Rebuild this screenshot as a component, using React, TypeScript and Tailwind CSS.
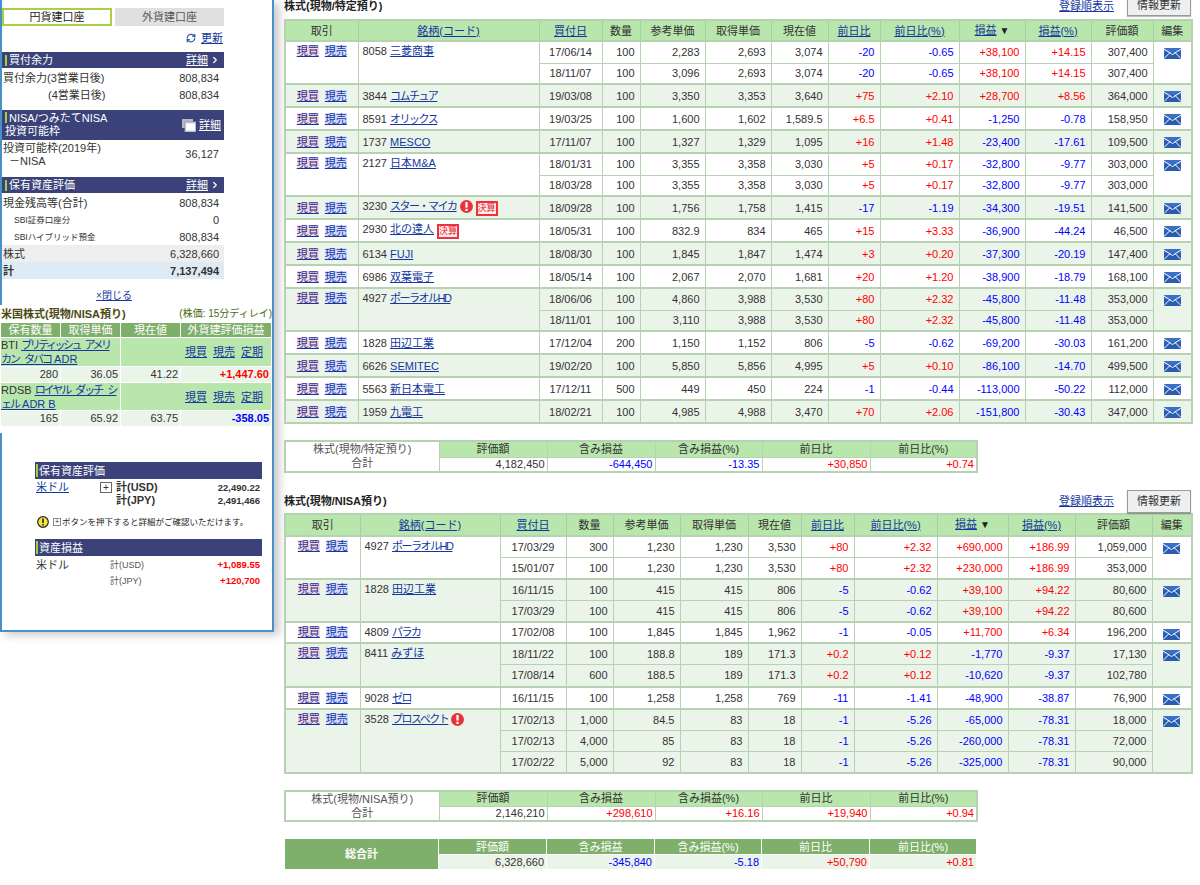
import React from "react";
import { RefreshCw, ChevronRight } from "lucide-react";

type Group = { code: string; name: string; warn?: boolean; badge?: boolean; rows: string[][]; hs?: number[] };

const t1: Group[] = [
  { code: "8058", name: "三菱商事", rows: [
    ["17/06/14","100","2,283","2,693","3,074","-20","-0.65","+38,100","+14.15","307,400"],
    ["18/11/07","100","3,096","2,693","3,074","-20","-0.65","+38,100","+14.15","307,400"]] },
  { code: "3844", name: "コムチュア", rows: [["19/03/08","100","3,350","3,353","3,640","+75","+2.10","+28,700","+8.56","364,000"]] },
  { code: "8591", name: "オリックス", rows: [["19/03/25","100","1,600","1,602","1,589.5","+6.5","+0.41","-1,250","-0.78","158,950"]] },
  { code: "1737", name: "MESCO", rows: [["17/11/07","100","1,327","1,329","1,095","+16","+1.48","-23,400","-17.61","109,500"]] },
  { code: "2127", name: "日本M&A", rows: [
    ["18/01/31","100","3,355","3,358","3,030","+5","+0.17","-32,800","-9.77","303,000"],
    ["18/03/28","100","3,355","3,358","3,030","+5","+0.17","-32,800","-9.77","303,000"]] },
  { code: "3230", name: "スター・マイカ", warn: true, badge: true, rows: [["18/09/28","100","1,756","1,758","1,415","-17","-1.19","-34,300","-19.51","141,500"]] },
  { code: "2930", name: "北の達人", badge: true, rows: [["18/05/31","100","832.9","834","465","+15","+3.33","-36,900","-44.24","46,500"]] },
  { code: "6134", name: "FUJI", rows: [["18/08/30","100","1,845","1,847","1,474","+3","+0.20","-37,300","-20.19","147,400"]] },
  { code: "6986", name: "双葉電子", rows: [["18/05/14","100","2,067","2,070","1,681","+20","+1.20","-38,900","-18.79","168,100"]] },
  { code: "4927", name: "ポーラオルHD", rows: [
    ["18/06/06","100","4,860","3,988","3,530","+80","+2.32","-45,800","-11.48","353,000"],
    ["18/11/01","100","3,110","3,988","3,530","+80","+2.32","-45,800","-11.48","353,000"]] },
  { code: "1828", name: "田辺工業", rows: [["17/12/04","200","1,150","1,152","806","-5","-0.62","-69,200","-30.03","161,200"]] },
  { code: "6626", name: "SEMITEC", rows: [["19/02/20","100","5,850","5,856","4,995","+5","+0.10","-86,100","-14.70","499,500"]] },
  { code: "5563", name: "新日本電工", rows: [["17/12/11","500","449","450","224","-1","-0.44","-113,000","-50.22","112,000"]] },
  { code: "1959", name: "九電工", rows: [["18/02/21","100","4,985","4,988","3,470","+70","+2.06","-151,800","-30.43","347,000"]] },
];

const t2: Group[] = [
  { code: "4927", name: "ポーラオルHD", rows: [
    ["17/03/29","300","1,230","1,230","3,530","+80","+2.32","+690,000","+186.99","1,059,000"],
    ["15/01/07","100","1,230","1,230","3,530","+80","+2.32","+230,000","+186.99","353,000"]] },
  { code: "1828", name: "田辺工業", rows: [
    ["16/11/15","100","415","415","806","-5","-0.62","+39,100","+94.22","80,600"],
    ["17/03/29","100","415","415","806","-5","-0.62","+39,100","+94.22","80,600"]] },
  { code: "4809", name: "パラカ", rows: [["17/02/08","100","1,845","1,845","1,962","-1","-0.05","+11,700","+6.34","196,200"]], hs: [21] },
  { code: "8411", name: "みずほ", rows: [
    ["18/11/22","100","188.8","189","171.3","+0.2","+0.12","-1,770","-9.37","17,130"],
    ["17/08/14","600","188.5","189","171.3","+0.2","+0.12","-10,620","-9.37","102,780"]], hs: [22, 22] },
  { code: "9028", name: "ゼロ", rows: [["16/11/15","100","1,258","1,258","769","-11","-1.41","-48,900","-38.87","76,900"]], hs: [22] },
  { code: "3528", name: "プロスペクト", warn: true, rows: [
    ["17/02/13","1,000","84.5","83","18","-1","-5.26","-65,000","-78.31","18,000"],
    ["17/02/13","4,000","85","83","18","-1","-5.26","-260,000","-78.31","72,000"],
    ["17/02/22","5,000","92","83","18","-1","-5.26","-325,000","-78.31","90,000"]] },
];

const A = ({ children, className = "" }: { children: React.ReactNode; className?: string }) => (
  <a href="#" className={"text-[#13379f] underline " + className}>{children}</a>
);

const sign = (v: string) => (v.startsWith("+") ? "text-[#ff0000]" : v.startsWith("-") ? "text-[#0000ff]" : "");
const kana = (s: string) => /[ァ-ヶー]/.test(s);

const Warn = () => (
  <svg width="13" height="13" viewBox="0 0 13 13" className="inline-block align-[-3px] ml-[3px]">
    <circle cx="6.5" cy="6.5" r="6.5" fill="#e8323c" />
    <rect x="5.4" y="2" width="2.2" height="5.6" fill="#ffffff" />
    <rect x="5.4" y="8.8" width="2.2" height="2.2" fill="#ffffff" />
  </svg>
);

const Badge = () => (
  <span className="inline-block ml-[3px] border-2 border-[#f0303c] bg-[#ffeeee] text-[#e8202c] text-[9px] leading-[9px] px-0 py-[1px] align-[-1px]">決算</span>
);

const Mail = () => (
  <svg width="17" height="11" viewBox="0 0 17 11" className="block mx-auto">
    <rect x="0" y="0" width="17" height="11" fill="#2a5cb0" />
    <rect x="0" y="0" width="17" height="4" fill="#3a70c8" />
    <path d="M0 1 L8.5 6.5 L17 1 M0 10.5 L6 4.5 M17 10.5 L11 4.5" stroke="#ffffff" strokeWidth="1" fill="none" />
  </svg>
);

const heads: [string, boolean][] = [
  ["取引", false], ["銘柄(コード)", true], ["買付日", true], ["数量", false], ["参考単価", false], ["取得単価", false],
  ["現在値", false], ["前日比", true], ["前日比(%)", true], ["損益", true], ["損益(%)", true], ["評価額", false], ["編集", false],
];

const StockTable = ({ groups, cols, singleH, headH }: { groups: Group[]; cols: React.ReactNode; singleH: number; headH: number }) => (
  <table className="table-fixed border-collapse w-[907px] border-2 border-[#b7d2b2]">
    {cols}
    <thead>
      <tr style={{ height: headH }} className="bg-[#b9e6ac]">
        {heads.map(([h, link]) => (
          <th key={h} className="border border-[#a9cda2] font-normal text-center p-0">
            {link ? <A>{h}</A> : h}
            {h === "損益" && <span className="text-[10px] text-[#222] ml-[3px]">▼</span>}
          </th>
        ))}
      </tr>
    </thead>
    <tbody>
      {groups.map((g, gi) => {
        const bg = gi % 2 === 1 ? "bg-[#ebf4e9]" : "bg-white";
        const n = g.rows.length;
        const top = n > 1 ? "align-top pt-[2px]" : "align-middle";
        return g.rows.map((r, ri) => {
          const h = g.hs ? g.hs[ri] : n === 1 ? singleH : ri === 0 ? 22 : 21;
          return (
            <tr key={g.code + ri} style={{ height: h }} className={bg + (ri === 0 ? " border-t-2 border-[#b7d2b2]" : "")}>
              {ri === 0 && (
                <>
                  <td rowSpan={n} className={"border-x border-[#b7d2b2] text-center p-0 " + top}>
                    <a href="#" className="text-[#13379f] underline bg-[#ffd6d6]">現買</a>
                    <a href="#" className="text-[#13379f] underline bg-[#d6dcff] ml-[6px]">現売</a>
                  </td>
                  <td rowSpan={n} className={"border-x border-[#b7d2b2] pl-[4px] pr-0 py-0 whitespace-nowrap " + top}>
                    {g.code} <A className={kana(g.name) ? "tracking-[-1.5px]" : ""}>{g.name}</A>
                    {g.warn && <Warn />}
                    {g.badge && <Badge />}
                  </td>
                </>
              )}
              {r.map((v, i) => (
                <td
                  key={i}
                  className={
                    "border border-[#b7d2b2] py-0 whitespace-nowrap " +
                    (i === 0 ? "text-center px-0 " : "text-right pl-0 pr-[5px] ") +
                    (i >= 5 && i <= 8 ? sign(v) : "")
                  }
                >
                  {v}
                </td>
              ))}
              {ri === 0 && (
                <td rowSpan={n} className="border-x border-[#b7d2b2] align-top pt-[6px] p-0">
                  <Mail />
                </td>
              )}
            </tr>
          );
        });
      })}
    </tbody>
  </table>
);

const cols1 = (
  <colgroup>
    <col className="w-[73px]" /><col className="w-[181px]" /><col className="w-[63px]" /><col className="w-[38px]" />
    <col className="w-[65px]" /><col className="w-[66px]" /><col className="w-[57px]" /><col className="w-[52px]" />
    <col className="w-[79px]" /><col className="w-[66px]" /><col className="w-[66px]" /><col className="w-[62px]" /><col className="w-[39px]" />
  </colgroup>
);
const cols2 = (
  <colgroup>
    <col className="w-[75px]" /><col className="w-[140px]" /><col className="w-[66px]" /><col className="w-[47px]" />
    <col className="w-[67px]" /><col className="w-[68px]" /><col className="w-[53px]" /><col className="w-[53px]" />
    <col className="w-[83px]" /><col className="w-[71px]" /><col className="w-[67px]" /><col className="w-[77px]" /><col className="w-[40px]" />
  </colgroup>
);

const sumHeads = ["評価額", "含み損益", "含み損益(%)", "前日比", "前日比(%)"];

const SumCols = () => (
  <colgroup>
    <col className="w-[154px]" /><col className="w-[108px]" /><col className="w-[108px]" /><col className="w-[107px]" /><col className="w-[108px]" /><col className="w-[107px]" />
  </colgroup>
);

const Summary = ({ label, vals }: { label: string; vals: string[] }) => (
  <table className="table-fixed border-collapse w-[692px] border-2 border-[#b7d2b2]">
    <SumCols />
    <tbody>
      <tr className="h-[16px]">
        <td rowSpan={2} className="text-center leading-[14px] p-0 text-[#555] border border-[#b7d2b2]">
          {label}
          <br />
          合計
        </td>
        {sumHeads.map((h) => (
          <td key={h} className="bg-[#b9e6ac] text-center p-0 border border-[#b7d2b2] leading-[13px]">{h}</td>
        ))}
      </tr>
      <tr className="h-[14px]">
        {vals.map((v, i) => (
          <td key={i} className={"text-right pr-[2px] py-0 pl-0 border border-[#b7d2b2] leading-[13px] " + sign(v)}>{v}</td>
        ))}
      </tr>
    </tbody>
  </table>
);

const Total = ({ vals }: { vals: string[] }) => (
  <table className="table-fixed border-collapse w-[692px]">
    <SumCols />
    <tbody>
      <tr className="h-[16px]">
        <td rowSpan={2} className="bg-[#7eaf6b] text-white font-bold text-center p-0 border border-white">総合計</td>
        {sumHeads.map((h) => (
          <td key={h} className="bg-[#7eaf6b] text-white text-center p-0 border border-white">{h}</td>
        ))}
      </tr>
      <tr className="h-[15px]">
        {vals.map((v, i) => (
          <td key={i} className={"bg-[#ebf4e9] text-right pr-[2px] py-0 pl-0 border border-white " + sign(v)}>{v}</td>
        ))}
      </tr>
    </tbody>
  </table>
);

const SideHead = ({ title, more = true }: { title: string; more?: boolean }) => (
  <div className="h-[16px] bg-[#3b4279] text-white flex items-center pl-[3px] pr-[4px]">
    <span className="w-[2px] h-[11px] bg-[#a4cf3c] mr-[2px]" />
    <span className="flex-1">{title}</span>
    {more && <span className="underline">詳細</span>}
    {more && <ChevronRight size={10} strokeWidth={3} className="ml-[2px]" />}
  </div>
);

const SideRow = ({ l, r, cls = "", lc = "" }: { l: React.ReactNode; r: string; cls?: string; lc?: string }) => (
  <div className={"h-[17px] flex items-center justify-between pl-[1px] pr-[5px] " + cls}>
    <span className={lc}>{l}</span>
    <span>{r}</span>
  </div>
);

const BoxHead = ({ title }: { title: string }) => (
  <div className="h-[17px] bg-[#3b4279] text-white flex items-center">
    <span className="w-[2px] h-[13px] bg-[#a4cf3c] mr-[1px] ml-[1px]" />
    {title}
  </div>
);

const Sidebar = () => (
  <div className="w-[274px] h-[632px] shrink-0 flex flex-col border-r-2 border-b-2 border-[#4a90c8] shadow-[5px_3px_9px_rgba(0,0,0,0.22)]">
    <div className="h-[305px] border-l-2 border-[#4a90c8] pt-[8px] shrink-0">
      <div className="w-[222px]">
        <div className="flex gap-[3px]">
          <div className="w-[110px] h-[18px] border-2 border-[#a8d040] flex items-center justify-center text-[#222]">円貨建口座</div>
          <div className="w-[109px] h-[18px] bg-[#e0e0e0] flex items-center justify-center text-[#555]">外貨建口座</div>
        </div>
        <div className="h-[16px] mt-[4px] flex items-center justify-end pr-[1px]">
          <RefreshCw size={10} strokeWidth={3} className="text-[#2a5aa8] mr-[5px]" />
          <A>更新</A>
        </div>
        <div className="mt-[6px]"><SideHead title="買付余力" /></div>
        <div className="mt-[1px]">
          <SideRow l="買付余力(3営業日後)" r="808,834" />
          <SideRow l={<span className="pl-[45px]">(4営業日後)</span>} r="808,834" />
        </div>
        <div className="mt-[7px] h-[30px] bg-[#3b4279] text-white flex items-center pl-[3px] pr-[3px] leading-[13px]">
          <div className="flex-1">
            <span className="inline-block w-[2px] h-[11px] bg-[#a4cf3c] mr-[2px] align-[-1px]" />
            NISA/つみたてNISA
            <br />
            投資可能枠
          </div>
          <svg width="14" height="13" viewBox="0 0 14 13" className="mr-[3px]">
            <rect x="0" y="0" width="11" height="9" fill="#b8b8c4" />
            <rect x="3" y="3" width="11" height="10" fill="#e8e8ec" stroke="#9a9aa8" />
            <rect x="4" y="5" width="9" height="6" fill="#ffffff" />
          </svg>
          <span className="underline">詳細</span>
        </div>
        <div className="h-[29px] flex items-center justify-between pl-[1px] pr-[5px] leading-[13px]">
          <span>
            投資可能枠(2019年)
            <br />
            <span className="pl-[6px]">－NISA</span>
          </span>
          <span>36,127</span>
        </div>
        <div className="mt-[8px]"><SideHead title="保有資産評価" /></div>
        <div className="mt-[1px]">
          <SideRow l="現金残高等(合計)" r="808,834" />
          <SideRow l="SBI証券口座分" r="0" lc="pl-[11px] text-[8.5px]" />
          <SideRow l="SBIハイブリッド預金" r="808,834" lc="pl-[11px] text-[8.5px]" />
          <SideRow l="株式" r="6,328,660" cls="bg-[#eeeeee]" />
          <SideRow l="計" r="7,137,494" cls="bg-[#deebf5] font-bold" />
        </div>
        <div className="mt-[9px] h-[16px] flex items-center justify-center pl-[2px] text-[10px]">
          <A>×閉じる</A>
        </div>
      </div>
    </div>

    <div className="h-[128px] shrink-0 pl-[1px] text-[11px]">
      <div className="h-[18px] flex items-center justify-between w-[271px]">
        <span className="font-bold text-[#4a4a10]">米国株式(現物/NISA預り)</span>
        <span className="text-[#4a6a10] text-[10px]">(株価: 15分ディレイ)</span>
      </div>
      <div className="w-[270px] grid grid-cols-[59px_59px_59px_90px] gap-x-[1px] gap-y-[1px] leading-[14px]">
        <div className="bg-[#7eaf6b] text-white text-center h-[14px]">保有数量</div>
        <div className="bg-[#7eaf6b] text-white text-center h-[14px]">取得単価</div>
        <div className="bg-[#7eaf6b] text-white text-center h-[14px]">現在値</div>
        <div className="bg-[#7eaf6b] text-white text-center h-[14px]">外貨建評価損益</div>

        <div className="col-span-2 bg-[#b9e6ac] h-[28px] whitespace-nowrap">
          BTI <A><span className="tracking-[-2.5px] [word-spacing:4px]">ブリティッシュ アメリ</span><br /><span className="tracking-[-2px] [word-spacing:4px]">カン タバコ</span> ADR</A>
        </div>
        <div className="col-span-2 bg-[#b9e6ac] h-[28px] flex items-center justify-end gap-[6px] pr-[8px]">
          <A>現買</A><A>現売</A><A>定期</A>
        </div>
        <div className="bg-[#ebf4e9] text-right pr-[2px] h-[15px]">280</div>
        <div className="bg-[#ebf4e9] text-right pr-[2px]">36.05</div>
        <div className="bg-[#ebf4e9] text-right pr-[2px]">41.22</div>
        <div className="bg-[#ebf4e9] text-right pr-[2px] font-bold text-[#ff0000]">+1,447.60</div>

        <div className="col-span-2 bg-[#b9e6ac] h-[27px] whitespace-nowrap">
          RDSB <A><span className="tracking-[-2px] [word-spacing:4px]">ロイヤル ダッチ シ</span><br /><span className="tracking-[-2px]">ェル</span> ADR B</A>
        </div>
        <div className="col-span-2 bg-[#b9e6ac] h-[27px] flex items-center justify-end gap-[6px] pr-[8px]">
          <A>現買</A><A>現売</A><A>定期</A>
        </div>
        <div className="bg-[#ebf4e9] text-right pr-[2px] h-[15px]">165</div>
        <div className="bg-[#ebf4e9] text-right pr-[2px]">65.92</div>
        <div className="bg-[#ebf4e9] text-right pr-[2px]">63.75</div>
        <div className="bg-[#ebf4e9] text-right pr-[2px] font-bold text-[#0000ff]">-358.05</div>
      </div>
    </div>

    <div className="flex-1 border-l-2 border-[#4a90c8] pt-[29px] pl-[33px]">
      <div className="w-[227px]">
        <BoxHead title="保有資産評価" />
        <div className="relative h-[29px] mt-[2px] leading-[13px]">
          <div className="flex">
            <span className="w-[65px] pl-[1px]"><A>米ドル</A></span>
            <span className="w-[12px] h-[11px] mt-[1px] border border-[#666] text-[10px] leading-[9px] text-center mr-[4px]">+</span>
            <span className="flex-1 font-bold">計(USD)</span>
            <span className="font-bold text-[9.5px] pr-[2px]">22,490.22</span>
          </div>
          <div className="flex pl-[81px]">
            <span className="flex-1 font-bold">計(JPY)</span>
            <span className="font-bold text-[9.5px] pr-[2px]">2,491,466</span>
          </div>
        </div>
        <div className="flex items-center h-[16px] mt-[4px] text-[8.5px] whitespace-nowrap text-[#222] pl-[2px]">
          <svg width="12" height="12" viewBox="0 0 12 12" className="mr-[4px] shrink-0">
            <circle cx="6" cy="6" r="5.3" fill="#f5e83a" stroke="#222" strokeWidth="1.2" />
            <rect x="5.2" y="2.5" width="1.6" height="4.5" fill="#222" />
            <rect x="5.2" y="8" width="1.6" height="1.6" fill="#222" />
          </svg>
          <span className="w-[8px] h-[8px] border border-[#888] text-[7px] leading-[6px] text-center mr-[1px] shrink-0">+</span>
          ボタンを押下すると詳細がご確認いただけます。
        </div>
        <div className="mt-[9px]"><BoxHead title="資産損益" /></div>
        <div className="flex h-[16px] items-center mt-[1px]">
          <span className="w-[75px] pl-[1px]">米ドル</span>
          <span className="flex-1 text-[9px] text-[#555]">計(USD)</span>
          <span className="font-bold text-[9.5px] text-[#ff0000] pr-[2px]">+1,089.55</span>
        </div>
        <div className="flex h-[16px] items-center pl-[75px]">
          <span className="flex-1 text-[9px] text-[#555]">計(JPY)</span>
          <span className="font-bold text-[9.5px] text-[#ff0000] pr-[2px]">+120,700</span>
        </div>
      </div>
    </div>
  </div>
);

const Title = ({ t, top }: { t: string; top?: boolean }) => (
  <div className={"flex w-[907px] items-center " + (top ? "h-[19px]" : "h-[23px]")}>
    <span className={"flex-1 font-bold text-[#222] " + (top ? "-mt-[7px]" : "")}>{t}</span>
    <span className={top ? "-mt-[7px]" : ""}><A>登録順表示</A></span>
    <button className={"ml-[13px] w-[64px] h-[23px] bg-[#efefef] border border-[#9a9a9a] text-[#333] shadow-[0_1px_1px_rgba(0,0,0,0.25)] " + (top ? "-mt-[10px]" : "")}>情報更新</button>
  </div>
);

export default function App() {
  return (
    <div className="w-[1200px] h-[885px] overflow-hidden bg-white flex text-[11px] leading-[14px] text-[#333] font-['Liberation_Sans','Noto_Sans_CJK_JP',sans-serif]">
      <Sidebar />
      <div className="ml-[10px] w-[907px]">
        <Title t="株式(現物/特定預り)" top />
        <StockTable groups={t1} cols={cols1} singleH={23} headH={21} />
        <div className="mt-[16px]">
          <Summary label="株式(現物/特定預り)" vals={["4,182,450", "-644,450", "-13.35", "+30,850", "+0.74"]} />
        </div>
        <div className="mt-[17px]"><Title t="株式(現物/NISA預り)" /></div>
        <StockTable groups={t2} cols={cols2} singleH={22} headH={22} />
        <div className="mt-[16px]">
          <Summary label="株式(現物/NISA預り)" vals={["2,146,210", "+298,610", "+16.16", "+19,940", "+0.94"]} />
        </div>
        <div className="mt-[16px]">
          <Total vals={["6,328,660", "-345,840", "-5.18", "+50,790", "+0.81"]} />
        </div>
      </div>
    </div>
  );
}
